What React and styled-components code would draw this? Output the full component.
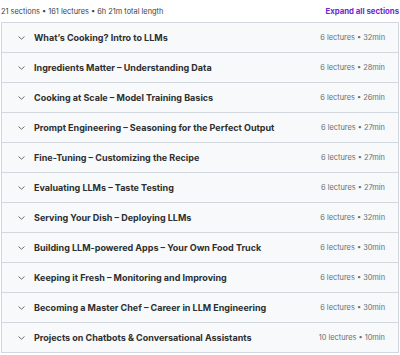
import styled, { createGlobalStyle } from "styled-components";

const GlobalStyle = createGlobalStyle`
  html, body {
    margin: 0;
    padding: 0;
    background: #ffffff;
    font-family: Inter, "Liberation Sans", sans-serif;
    color: #2d2f31;
  }
`;

const SECTIONS = [
  { title: "What’s Cooking? Intro to LLMs", lectures: 6, length: "32min" },
  { title: "Ingredients Matter – Understanding Data", lectures: 6, length: "28min" },
  { title: "Cooking at Scale – Model Training Basics", lectures: 6, length: "26min" },
  { title: "Prompt Engineering – Seasoning for the Perfect Output", lectures: 6, length: "27min" },
  { title: "Fine-Tuning – Customizing the Recipe", lectures: 6, length: "27min" },
  { title: "Evaluating LLMs – Taste Testing", lectures: 6, length: "27min" },
  { title: "Serving Your Dish – Deploying LLMs", lectures: 6, length: "32min" },
  { title: "Building LLM-powered Apps – Your Own Food Truck", lectures: 6, length: "30min" },
  { title: "Keeping it Fresh – Monitoring and Improving", lectures: 6, length: "30min" },
  { title: "Becoming a Master Chef – Career in LLM Engineering", lectures: 6, length: "30min" },
  { title: "Projects on Chatbots & Conversational Assistants", lectures: 10, length: "10min" },
];

const Chevron = () => (
  <svg width="7" height="4" viewBox="0 0 7 4" fill="none">
    <path d="M0.8 0.8l2.7 2.4 2.7-2.4" stroke="#6a6f73" strokeWidth="1" strokeLinecap="round" strokeLinejoin="round" />
  </svg>
);

const App = () => {
  return (
    <>
      <GlobalStyle />
      <Wrapper>
        <Summary>
          <Stats>21 sections • 161 lectures • 6h 21m total length</Stats>
          <ExpandLink>Expand all sections</ExpandLink>
        </Summary>
        <Accordion>
          {SECTIONS.map((s) => (
            <Row key={s.title}>
              <Left>
                <IconBox>
                  <Chevron />
                </IconBox>
                <Title>{s.title}</Title>
              </Left>
              <Meta>
                {s.lectures} lectures • {s.length}
              </Meta>
            </Row>
          ))}
        </Accordion>
      </Wrapper>
    </>
  );
};

const Wrapper = styled.div`
  width: 398px;
  padding-left: 1px;
`;

const Summary = styled.div`
  display: flex;
  justify-content: space-between;
  align-items: center;
  height: 22px;
`;

const Stats = styled.span`
  font-size: 7.4px;
  color: #3e4143;
`;

const ExpandLink = styled.span`
  font-size: 7.8px;
  font-weight: 700;
  color: #6d28d2;
`;

const Accordion = styled.div`
  border: 1px solid #d1d7dc;
  border-bottom: 0;
`;

const Row = styled.div`
  display: flex;
  align-items: center;
  justify-content: space-between;
  height: 29px;
  background: #f7f9fa;
  border-bottom: 1px solid #d1d7dc;
  padding: 0 13px 0 16px;
`;

const Left = styled.div`
  display: flex;
  align-items: center;
  gap: 9px;
`;

const IconBox = styled.span`
  display: flex;
  align-items: center;
  width: 7px;
`;

const Title = styled.span`
  font-size: 9px;
  font-weight: 700;
  color: #2d2f31;
`;

const Meta = styled.span`
  font-size: 7.4px;
  color: #6a6f73;
`;

export default App;
